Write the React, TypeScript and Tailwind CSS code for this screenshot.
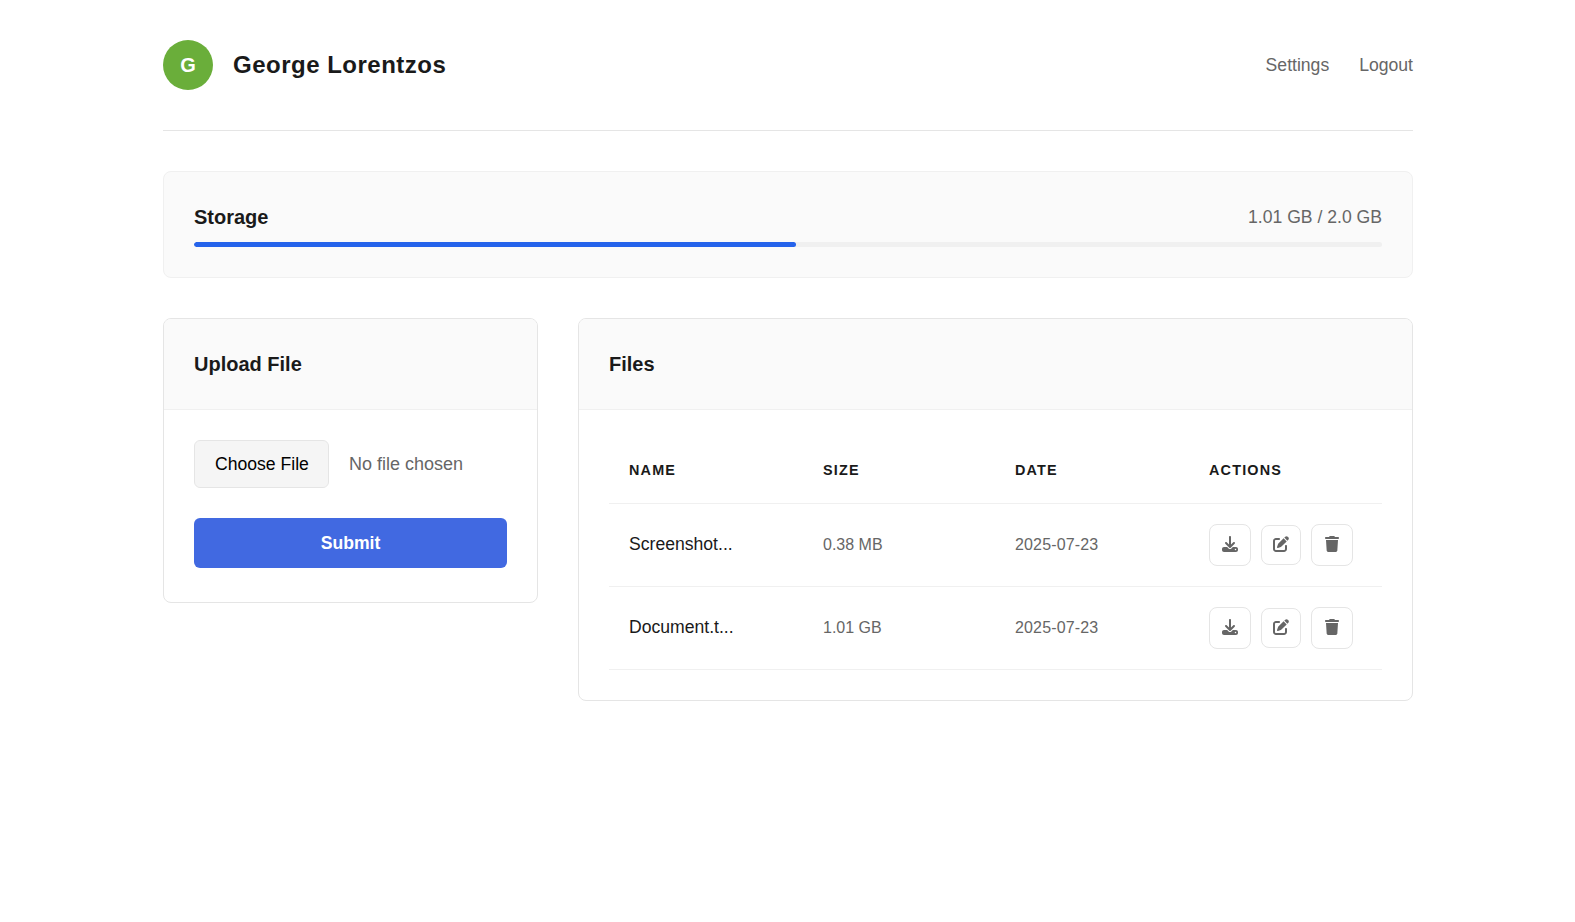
import { FaDownload, FaPenToSquare, FaTrash } from "react-icons/fa6";

const files = [
  { name: "Screenshot...", size: "0.38 MB", date: "2025-07-23" },
  { name: "Document.t...", size: "1.01 GB", date: "2025-07-23" },
];

export default function App() {
  return (
    <div className="min-h-[922px] bg-white font-['Liberation_Sans',Arial,sans-serif] text-[#1a1a1a]">
      <div className="ml-[163px] w-[1250px] pt-10">
        <header className="flex items-center justify-between border-b border-[#e5e5e5] pb-10">
          <div className="flex items-center gap-5">
            <div className="flex h-[50px] w-[50px] items-center justify-center rounded-full bg-[#6aae3a] text-xl font-bold text-white">G</div>
            <h1 className="text-2xl font-bold tracking-[0.5px]">George Lorentzos</h1>
          </div>
          <nav className="flex gap-[30px] text-[17.6px] text-[#666666]">
            <a>Settings</a>
            <a>Logout</a>
          </nav>
        </header>

        <section className="mt-10 rounded-lg border border-[#f0f0f0] bg-[#fafafa] p-[30px]">
          <div className="flex items-center justify-between">
            <span className="text-xl leading-[30px] font-bold">Storage</span>
            <span className="text-[17.6px] leading-[30px] text-[#666666]">1.01 GB / 2.0 GB</span>
          </div>
          <div className="mt-[10px] h-[5px] overflow-hidden rounded-full bg-[#f0f0f0]">
            <div className="h-full w-[50.7%] rounded-full bg-[#2563eb]" />
          </div>
        </section>

        <div className="mt-10 flex items-start gap-10">
          <section className="w-[375px] shrink-0 overflow-hidden rounded-lg border border-[#e5e5e5]">
            <div className="border-b border-[#f0f0f0] bg-[#fafafa] p-[30px]">
              <h2 className="text-xl leading-[30px] font-bold">Upload File</h2>
            </div>
            <div className="px-[30px] pt-[30px] pb-[34px]">
              <div className="flex items-center gap-5">
                <button className="h-12 rounded-md border border-[#e5e5e5] bg-[#f5f5f5] pr-[19px] pl-5 text-[17.6px] text-black">Choose File</button>
                <span className="text-lg text-[#666666]">No file chosen</span>
              </div>
              <button className="mt-[30px] h-[50px] w-full rounded-md bg-[#4169e1] text-[17.6px] font-bold text-white">Submit</button>
            </div>
          </section>

          <section className="min-w-0 flex-1 overflow-hidden rounded-lg border border-[#e5e5e5]">
            <div className="border-b border-[#f0f0f0] bg-[#fafafa] p-[30px]">
              <h2 className="text-xl leading-[30px] font-bold">Files</h2>
            </div>
            <div className="p-[30px]">
              <table className="w-full border-collapse text-left">
                <thead>
                  <tr className="border-b border-[#f0f0f0]">
                    <th className="w-[194px] px-5 pt-[19px] pb-[22px] text-[14.4px] leading-[22px] font-bold tracking-[1.2px]">NAME</th>
                    <th className="w-[192px] px-5 pt-[19px] pb-[22px] text-[14.4px] leading-[22px] font-bold tracking-[1.2px]">SIZE</th>
                    <th className="w-[194px] px-5 pt-[19px] pb-[22px] text-[14.4px] leading-[22px] font-bold tracking-[1.2px]">DATE</th>
                    <th className="px-5 pt-[19px] pb-[22px] text-[14.4px] leading-[22px] font-bold tracking-[1.2px]">ACTIONS</th>
                  </tr>
                </thead>
                <tbody>
                  {files.map((f) => (
                    <tr key={f.name} className="border-b border-[#f0f0f0]">
                      <td className="px-5 pt-[19px] pb-[21px] text-[17.6px]">{f.name}</td>
                      <td className="p-5 text-base text-[#666666]">{f.size}</td>
                      <td className="p-5 text-base tracking-[0.15px] text-[#666666]">{f.date}</td>
                      <td className="p-5">
                        <div className="flex items-center gap-[10px]">
                          <button className="flex h-[42px] w-[42px] items-center justify-center rounded-lg border border-[#e5e5e5] bg-white text-[#666666]"><FaDownload size={16} className="-mt-0.5" /></button>
                          <button className="flex h-10 w-10 items-center justify-center rounded-lg border border-[#e5e5e5] bg-white text-[#666666]"><FaPenToSquare size={16} className="-mt-0.5" /></button>
                          <button className="flex h-[42px] w-[42px] items-center justify-center rounded-lg border border-[#e5e5e5] bg-white text-[#666666]"><FaTrash size={16} className="-mt-0.5" /></button>
                        </div>
                      </td>
                    </tr>
                  ))}
                </tbody>
              </table>
            </div>
          </section>
        </div>
      </div>
    </div>
  );
}
